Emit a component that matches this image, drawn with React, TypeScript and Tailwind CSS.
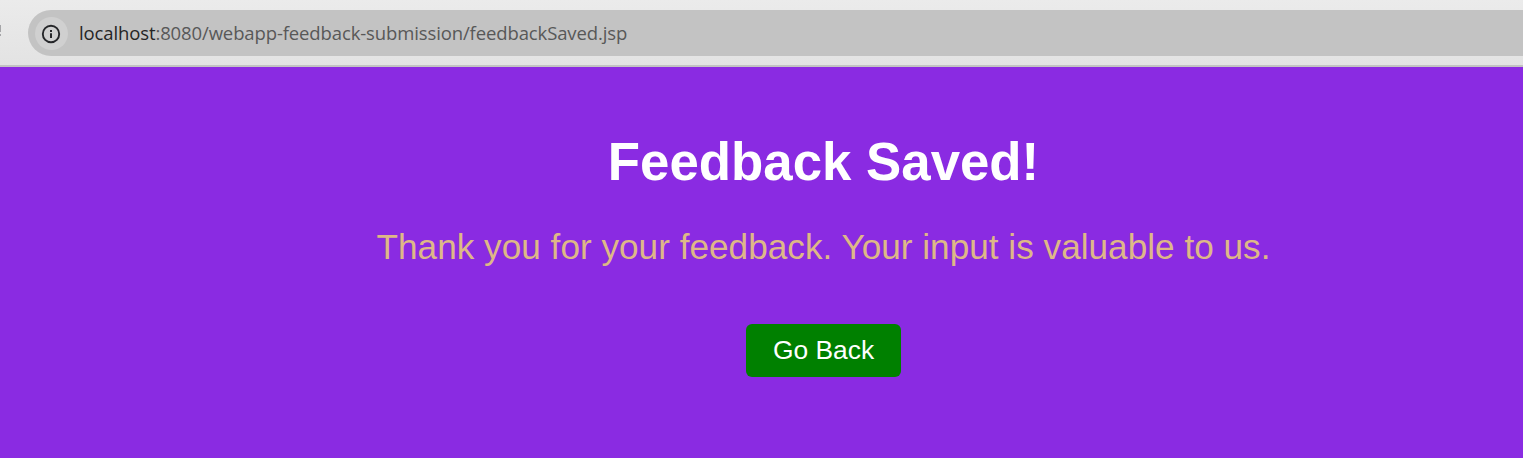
function InfoIcon() {
  return (
    <svg width="20" height="20" viewBox="0 0 20 20" fill="none" aria-hidden="true">
      <circle cx="10" cy="10" r="8.2" stroke="#252629" strokeWidth="1.9" />
      <path d="M10 9.2V14" stroke="#252629" strokeWidth="2" />
      <path d="M10 5.9V7.9" stroke="#252629" strokeWidth="2" />
    </svg>
  );
}

function AddressBar() {
  return (
    <header className="relative flex h-[67px] shrink-0 items-start border-b-2 border-[#c3c3c3] bg-linear-to-b from-[#ebebeb] to-[#e3e3e3] pt-[10px] pl-7">
      <svg className="absolute top-[25px] left-0" width="2" height="11" aria-hidden="true">
        <path d="M0.5 0V7M0.5 9V11" stroke="#a5a5a8" strokeWidth="1" />
      </svg>
      <div className="flex h-[46px] flex-1 items-center rounded-l-full bg-[#c3c3c3] pl-[7px]">
        <span className="flex size-[33px] items-center justify-center rounded-full bg-[#d0d0d0] pt-px pr-px">
          <InfoIcon />
        </span>
        <span className="ml-[11px] font-['Open_Sans',sans-serif] text-[18.5px] leading-6 tracking-[-0.12px] whitespace-nowrap text-[#585858]">
          <span className="text-[#252525]">localhost</span>:8080/webapp-feedback-submission/feedbackSaved.jsp
        </span>
      </div>
    </header>
  );
}

export default function App() {
  return (
    <div className="flex h-[458px] w-full flex-col overflow-hidden bg-[#8a2be2]">
      <AddressBar />
      <main className="flex w-[1647px] flex-col items-center pt-[64px] font-['Liberation_Sans',Arial,sans-serif]">
        <h1 className="text-[52.8px] leading-[61px] font-bold whitespace-nowrap text-white">Feedback Saved!</h1>
        <p className="mt-[34px] text-[35.2px] leading-[41px] whitespace-nowrap text-[#deb887]">
          Thank you for your feedback. Your input is valuable to us.
        </p>
        <button className="mt-[57px] h-[53px] w-[155px] rounded-[6px] bg-[#008000] pb-[2px] text-[26.4px] leading-[30px] whitespace-nowrap text-white">
          Go Back
        </button>
      </main>
    </div>
  );
}
